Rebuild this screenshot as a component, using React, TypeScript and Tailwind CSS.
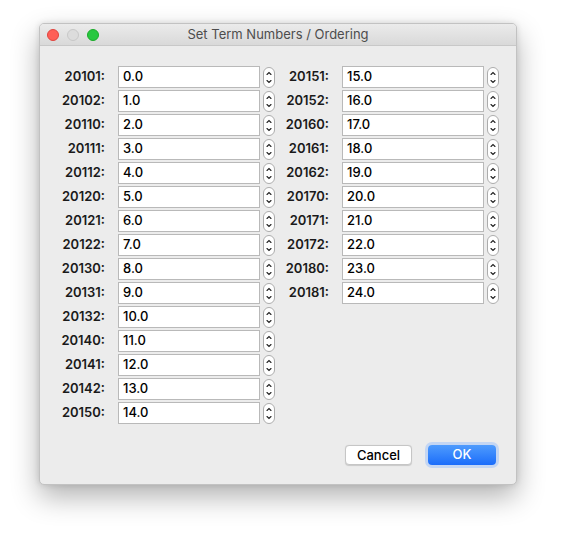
import React from 'react';

const LEFT = [
  ['20101', '0.0'],
  ['20102', '1.0'],
  ['20110', '2.0'],
  ['20111', '3.0'],
  ['20112', '4.0'],
  ['20120', '5.0'],
  ['20121', '6.0'],
  ['20122', '7.0'],
  ['20130', '8.0'],
  ['20131', '9.0'],
  ['20132', '10.0'],
  ['20140', '11.0'],
  ['20141', '12.0'],
  ['20142', '13.0'],
  ['20150', '14.0'],
];

const RIGHT = [
  ['20151', '15.0'],
  ['20152', '16.0'],
  ['20160', '17.0'],
  ['20161', '18.0'],
  ['20162', '19.0'],
  ['20170', '20.0'],
  ['20171', '21.0'],
  ['20172', '22.0'],
  ['20180', '23.0'],
  ['20181', '24.0'],
];

const Stepper = () => (
  <svg width="12" height="21" viewBox="0 0 12 21" className="shrink-0">
    <rect x="0.5" y="0.5" width="11" height="20" rx="5.5" fill="#fff" stroke="#acacac" />
    <path d="M4 7.5 L6 5.5 L8 7.5" fill="none" stroke="#222" strokeWidth="1.1" strokeLinecap="round" />
    <path d="M4 13.5 L6 15.5 L8 13.5" fill="none" stroke="#222" strokeWidth="1.1" strokeLinecap="round" />
  </svg>
);

const Row = ({ label, value }: { label: string; value: string }) => (
  <div className="flex h-[22px] items-center">
    <span className="w-[46px] text-right text-[13px] font-semibold text-[#1a1a1a]">{label}:</span>
    <div className="ml-[13px] flex h-[22px] w-[142px] items-center border border-[#b9b9b9] bg-white pl-[4px] text-[13px] font-medium text-black">
      {value}
    </div>
    <div className="ml-[3px]">
      <Stepper />
    </div>
  </div>
);

export default function App() {
  return (
    <div
      className="h-[543px] w-[567px] bg-white pl-[39px] pt-[23px]"
      style={{ fontFamily: 'Inter, "Noto Sans", sans-serif' }}
    >
      <div className="flex h-[462px] w-[478px] flex-col overflow-hidden rounded-[5px] border border-[#c2c2c2] bg-[#ececec] shadow-[0_12px_28px_rgba(0,0,0,0.3),0_0_6px_rgba(0,0,0,0.12)]">
        <div className="relative flex h-[22px] shrink-0 items-center justify-center border-b border-[#c8c8c8] bg-gradient-to-b from-[#ebebeb] to-[#d9d9d9]">
          <div className="absolute left-[7px] top-[5px] flex gap-[8px]">
            <span className="h-[12px] w-[12px] rounded-full border border-[#e0443e] bg-[#fe5f57]" />
            <span className="h-[12px] w-[12px] rounded-full border border-[#c8c8c8] bg-[#dcdcdc]" />
            <span className="h-[12px] w-[12px] rounded-full border border-[#1aab29] bg-[#28c840]" />
          </div>
          <span className="text-[13px] text-[#4d4d4d]">Set Term Numbers / Ordering</span>
        </div>
        <div className="flex flex-1 flex-col pl-[19px] pr-[20px] pt-[20px] pb-[19px]">
          <div className="flex">
            <div className="flex flex-col gap-[2px]">
              {LEFT.map(([l, v]) => (
                <Row key={l} label={l} value={v} />
              ))}
            </div>
            <div className="ml-[8px] flex flex-col gap-[2px]">
              {RIGHT.map(([l, v]) => (
                <Row key={l} label={l} value={v} />
              ))}
            </div>
          </div>
          <div className="mt-auto flex justify-end gap-[16px]">
            <button className="h-[20px] w-[67px] rounded-[4px] border border-[#c6c6c6] bg-white text-[13px] font-medium text-black shadow-[0_0.5px_1px_rgba(0,0,0,0.15)]">
              Cancel
            </button>
            <button className="h-[20px] w-[68px] rounded-[4px] bg-gradient-to-b from-[#4e9bfd] to-[#1b6cfa] text-[13px] font-medium text-white shadow-[0_0_0_3px_#c4d6f3]">
              OK
            </button>
          </div>
        </div>
      </div>
    </div>
  );
}
